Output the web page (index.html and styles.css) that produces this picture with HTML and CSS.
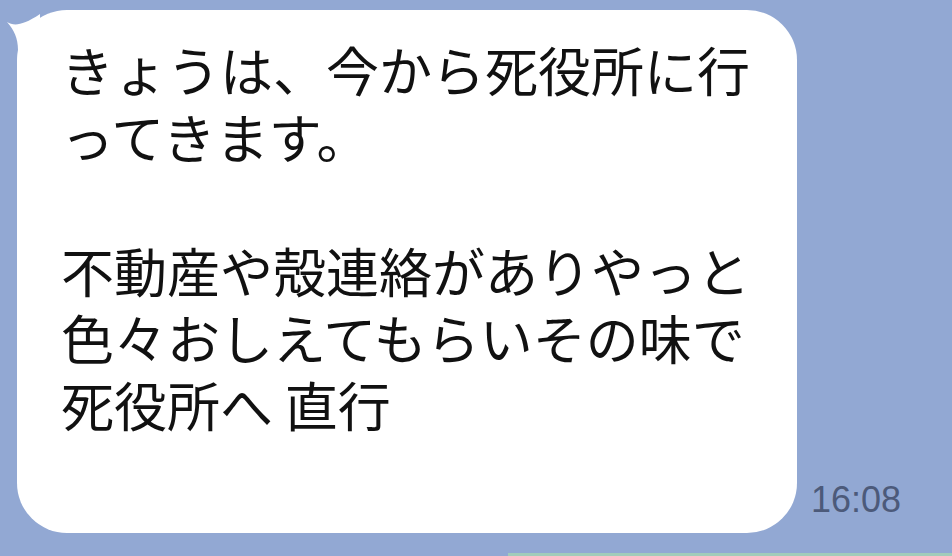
FILE: index.html
```html
<!DOCTYPE html>
<html lang="ja">
<head>
<meta charset="utf-8">
<link rel="stylesheet" href="styles.css">
</head>
<body>
<div class="chat">
  <div class="row">
    <div class="bubble">
      <svg class="tail" width="40" height="40" viewBox="0 0 40 40"><path d="M7 12 C 14 16, 22 16, 40 4 L 40 40 L 18 40 C 18 28, 14 20, 7 12 Z" fill="#ffffff"/></svg>
      <div class="text">
        <div class="line">きょうは、今から死役所に行</div>
        <div class="line">ってきます。</div>
        <div class="line"></div>
        <div class="line">不動産や殻連絡がありやっと</div>
        <div class="line">色々おしえてもらいその味で</div>
        <div class="line">死役所へ 直行</div>
      </div>
    </div>
    <div class="time">16:08</div>
  </div>
  <div class="next"></div>
</div>
</body>
</html>
```
FILE: styles.css
```css
html, body {
  margin: 0;
  padding: 0;
}
body {
  width: 952px;
  height: 556px;
  overflow: hidden;
  background: #92a8d3;
}
.chat {
  display: flex;
  flex-direction: column;
  padding-top: 10px;
}
.row {
  display: flex;
  align-items: flex-end;
  gap: 14px;
  padding-left: 17px;
}
.bubble {
  position: relative;
  width: 780px;
  height: 523px;
  box-sizing: border-box;
  background: #ffffff;
  border-radius: 50px;
  padding: 26px 20px 0 44px;
}
.tail {
  position: absolute;
  left: -17px;
  top: 0;
}
.text {
  font-family: "Noto Sans CJK JP", sans-serif;
  font-size: 53px;
  color: #111111;
  white-space: nowrap;
}
.line {
  height: 67px;
  line-height: 67px;
}
.time {
  font-family: "Liberation Sans", Arial, sans-serif;
  font-size: 36px;
  line-height: 1;
  color: #4c5a7a;
  padding-bottom: 15px;
}
.next {
  margin-top: 20px;
  margin-left: 508px;
  height: 3px;
  background: #a2ccba;
}
```
